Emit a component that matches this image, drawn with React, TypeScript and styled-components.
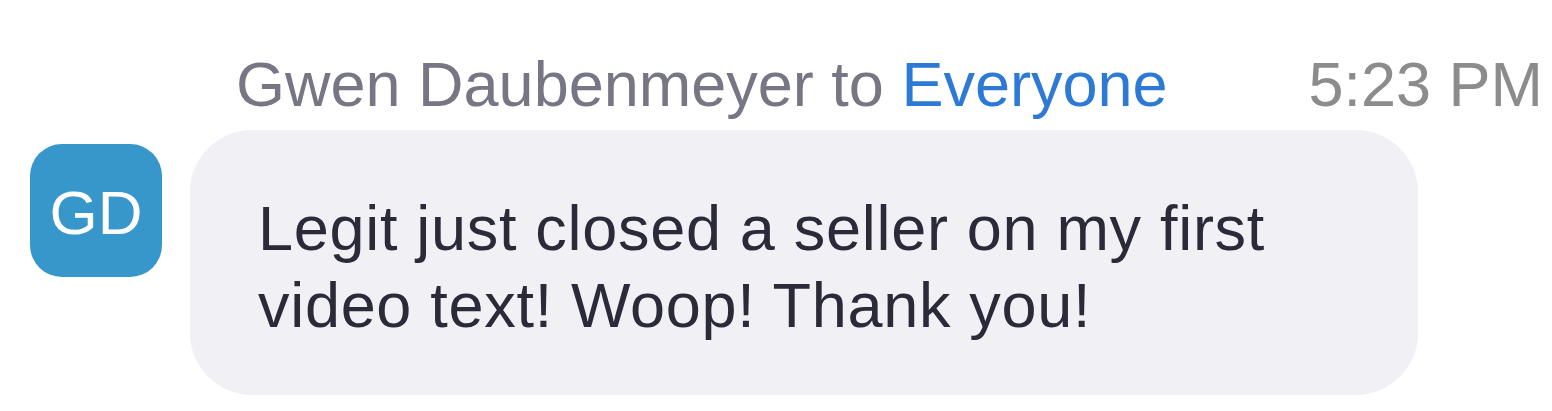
import React from "react";
import styled, { createGlobalStyle } from "styled-components";

const GlobalStyle = createGlobalStyle`
  html, body {
    margin: 0;
    padding: 0;
    background: #ffffff;
  }
  body {
    font-family: "Liberation Sans", Arial, Helvetica, sans-serif;
    -webkit-font-smoothing: antialiased;
  }
`;

const message = {
  initials: "GD",
  sender: "Gwen Daubenmeyer",
  recipient: "Everyone",
  time: "5:23 PM",
  text: "Legit just closed a seller on my first video text! Woop! Thank you!",
};

const App = () => {
  return (
    <>
      <GlobalStyle />
      <ChatItem>
        <MetaRow>
          <Sender>
            {message.sender} to <Recipient>{message.recipient}</Recipient>
          </Sender>
          <Time>{message.time}</Time>
        </MetaRow>
        <MessageRow>
          <AvatarCol>
            <Avatar>{message.initials}</Avatar>
          </AvatarCol>
          <Bubble>{message.text}</Bubble>
        </MessageRow>
      </ChatItem>
    </>
  );
};

export default App;

const ChatItem = styled.div`
  width: 1552px;
  height: 411px;
  padding-top: 49px;
  box-sizing: border-box;
  overflow: hidden;
`;

const MetaRow = styled.div`
  display: flex;
  justify-content: space-between;
  align-items: baseline;
  padding: 0 9px 0 236px;
  height: 70px;
  line-height: 70px;
  font-size: 63px;
  white-space: nowrap;
`;

const Sender = styled.span`
  color: #767684;
`;

const Recipient = styled.span`
  color: #2d7ad6;
`;

const Time = styled.span`
  color: #8c8c8c;
`;

const MessageRow = styled.div`
  display: flex;
  align-items: flex-start;
  margin-top: 11px;
`;

const AvatarCol = styled.div`
  width: 190px;
  flex-shrink: 0;
  padding: 14px 0 0 30px;
  box-sizing: border-box;
`;

const Avatar = styled.div`
  width: 132px;
  height: 133px;
  padding-top: 3px;
  box-sizing: border-box;
  border-radius: 32px;
  background: #3797cb;
  color: #ffffff;
  display: flex;
  align-items: center;
  justify-content: center;
  font-size: 62px;
`;

const Bubble = styled.div`
  width: 1228px;
  box-sizing: border-box;
  padding: 60px 100px 51px 68px;
  background: #f0f0f5;
  border-radius: 62px;
  color: #2a2a38;
  font-size: 63px;
  letter-spacing: 0.7px;
  line-height: 77px;
`;
